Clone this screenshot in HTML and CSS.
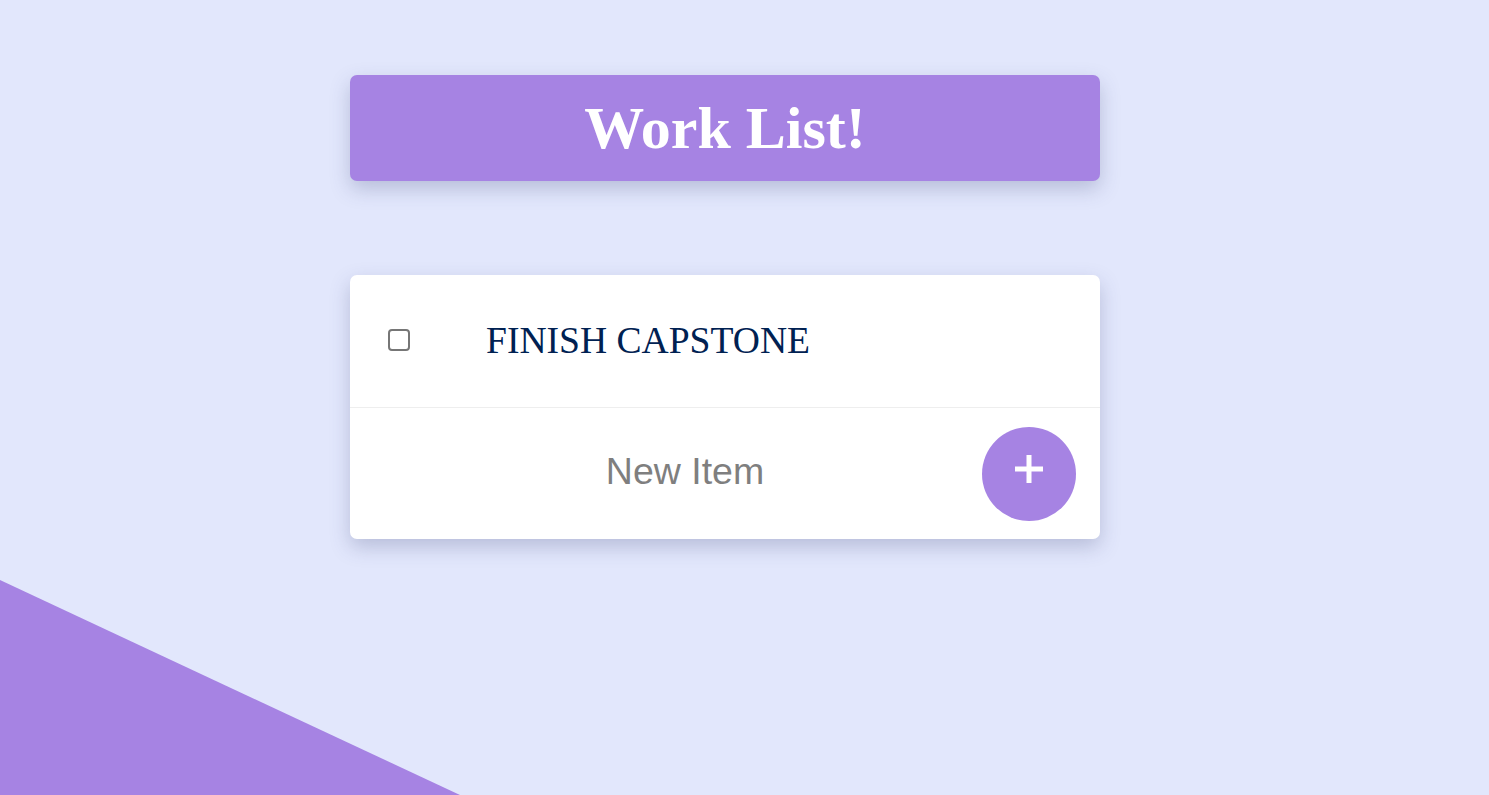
FILE: index.html
```html
<!DOCTYPE html>
<html>
<head>
<meta charset="utf-8">
<title>Work List</title>
<link rel="stylesheet" href="styles.css">
</head>
<body>
<main class="page">
  <header class="heading">
    <h1 class="heading-title">Work List!</h1>
  </header>
  <section class="card">
    <div class="item">
      <input class="item-check" type="checkbox">
      <p class="item-text">FINISH CAPSTONE</p>
    </div>
    <form class="new-item">
      <input class="new-item-input" type="text" placeholder="New Item">
      <button class="add-btn" type="button" aria-label="Add">
        <svg class="add-icon" width="28" height="28" viewBox="0 0 28 28"><rect x="0" y="11.5" width="28" height="5" fill="#fff"/><rect x="11.5" y="0" width="5" height="28" fill="#fff"/></svg>
      </button>
    </form>
  </section>
</main>
<div class="corner"></div>
</body>
</html>
```

FILE: styles.css
```css
html, body {
  margin: 0;
  padding: 0;
}
body {
  background: #e2e7fc;
  min-height: 795px;
  overflow: hidden;
  font-family: "Liberation Serif", "Times New Roman", serif;
}
.page {
  width: 750px;
  margin-left: 350px;
  padding-top: 75px;
  display: flex;
  flex-direction: column;
  gap: 94px;
}
.heading {
  background: #a683e3;
  border-radius: 7px;
  height: 106px;
  display: flex;
  align-items: center;
  justify-content: center;
  box-shadow: 0 8px 20px rgba(60, 70, 120, 0.26);
}
.heading-title {
  margin: 0;
  color: #fff;
  font-size: 60px;
  font-weight: bold;
  font-family: "Liberation Serif", "Times New Roman", serif;
}
.card {
  background: #fff;
  border-radius: 7px;
  box-shadow: 0 8px 20px rgba(60, 70, 120, 0.26);
  display: flex;
  flex-direction: column;
}
.item {
  height: 132px;
  display: flex;
  align-items: center;
  padding-left: 38px;
  border-bottom: 1px solid #eeeeee;
}
.item-check {
  appearance: none;
  -webkit-appearance: none;
  margin: 0;
  width: 22px;
  height: 22px;
  border: 2px solid #767676;
  border-radius: 4px;
  box-sizing: border-box;
  background: #fff;
  position: relative;
  top: -1px;
}
.item-text {
  margin: 0 0 0 76px;
  font-size: 37.6px;
  color: #002152;
  position: relative;
  top: -1px;
}
.new-item {
  margin: 0;
  height: 131px;
  display: flex;
  align-items: center;
  padding-right: 24px;
}
.new-item-input {
  flex: 1;
  margin-left: 48px;
  margin-right: 10px;
  border: none;
  outline: none;
  background: transparent;
  text-align: center;
  font-family: "Liberation Sans", Arial, sans-serif;
  font-size: 37.5px;
  color: #333;
  padding: 0;
  position: relative;
  top: -2px;
}
.new-item-input::placeholder {
  color: #7f7f7f;
}
.add-btn {
  width: 94px;
  height: 94px;
  border-radius: 50%;
  border: none;
  background: #a683e3;
  display: flex;
  align-items: center;
  justify-content: center;
  padding: 0;
  cursor: pointer;
}
.add-icon {
  margin-bottom: 10px;
  display: block;
}
.corner {
  position: absolute;
  left: 0;
  bottom: 0;
  width: 460px;
  height: 215px;
  background: #a683e3;
  clip-path: polygon(0 0, 100% 100%, 0 100%);
}
```
